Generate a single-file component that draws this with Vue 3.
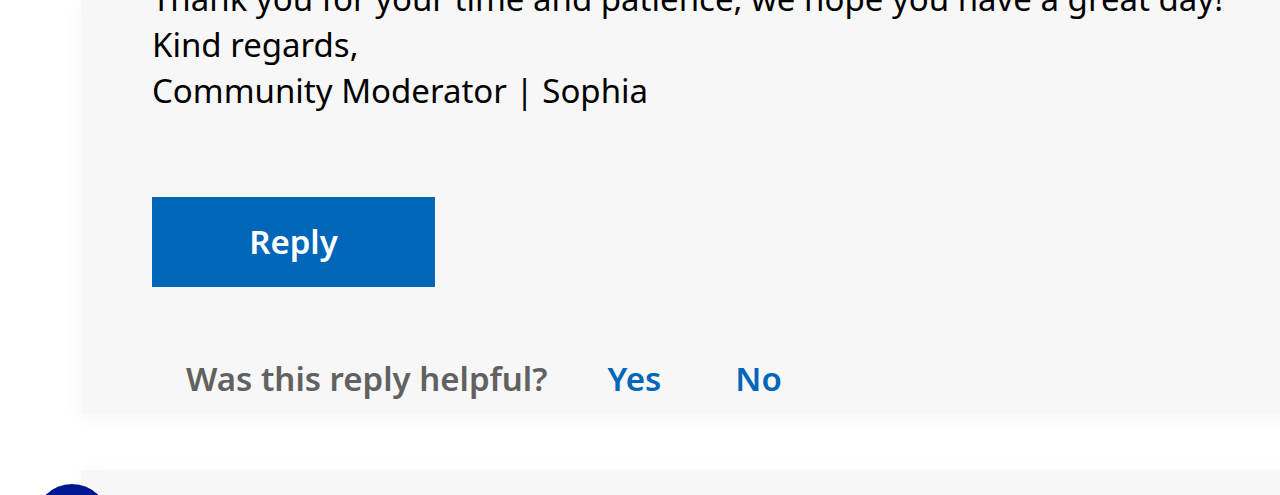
<script setup>
import { ref } from 'vue'

const messageLines = [
  'Thank you for your time and patience, we hope you have a great day!',
  'Kind regards,',
  'Community Moderator | Sophia',
]
const answers = ['Yes', 'No']
const chosen = ref('')
</script>

<template>
  <main class="thread">
    <article class="card reply">
      <p class="message">
        <span v-for="line in messageLines" :key="line" class="line">{{ line }}</span>
      </p>
      <button type="button" class="reply-button">Reply</button>
      <div class="feedback" role="group" aria-labelledby="helpful-label">
        <span id="helpful-label" class="question">Was this reply helpful?</span>
        <button
          v-for="answer in answers"
          :key="answer"
          type="button"
          class="answer"
          :aria-pressed="chosen === answer"
          @click="chosen = answer"
        >{{ answer }}</button>
      </div>
    </article>
    <article class="card next">
      <span class="avatar"></span>
    </article>
  </main>
</template>

<style>
body {
  background: #fff;
  overflow: hidden;
}
</style>

<style scoped>
.thread {
  display: flex;
  flex-direction: column;
  gap: 56px;
  height: 100vh;
  padding-left: 81px;
  overflow: hidden;
  box-sizing: border-box;
  font-family: "Noto Sans", "Open Sans", sans-serif;
  font-size: 33px;
  line-height: 46px;
  color: #000;
}

.card {
  position: relative;
  flex-shrink: 0;
  margin-right: -40px;
  background: #f7f7f7;
  box-shadow: 0 4px 20px rgba(0, 0, 0, 0.04);
}

.reply {
  display: flex;
  flex-direction: column;
  align-items: flex-start;
  padding: 0 0 12px 71px;
}

.message {
  margin: -24px 0 83px;
  white-space: nowrap;
}

.line {
  display: block;
}

.reply-button {
  width: 283px;
  height: 90px;
  padding: 0;
  border: 0;
  background: #0067b8;
  color: #fff;
  font: inherit;
  font-weight: 600;
}

.feedback {
  display: flex;
  margin: 69px 0 0 34px;
  font-weight: 600;
  white-space: nowrap;
}

.question {
  color: #616161;
}

.answer {
  margin-left: 60px;
  padding: 0;
  border: 0;
  background: none;
  color: #0067b8;
  font: inherit;
  cursor: pointer;
}

.answer + .answer {
  margin-left: 74px;
}

.next {
  height: 200px;
}

.avatar {
  position: absolute;
  top: 14px;
  left: -46px;
  width: 74px;
  height: 74px;
  border-radius: 50%;
  background: #00188f;
}
</style>
